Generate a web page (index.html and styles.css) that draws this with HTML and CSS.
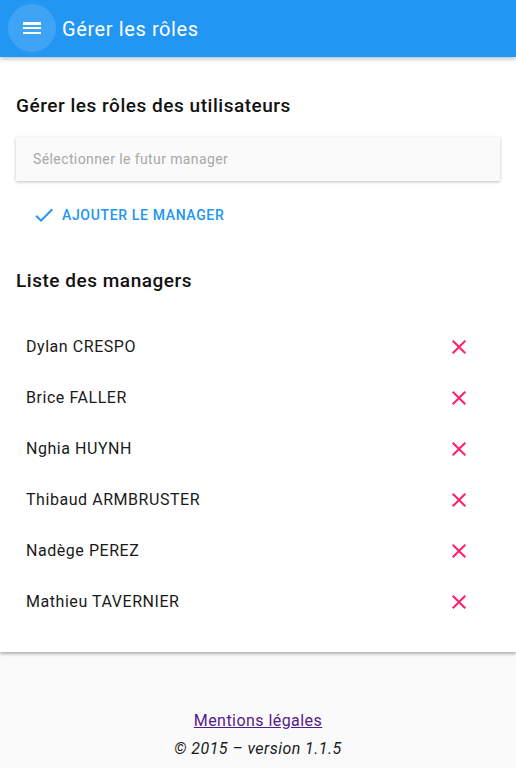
FILE: index.html
```html
<!DOCTYPE html>
<html lang="fr">
<head>
<meta charset="utf-8">
<title>Gérer les rôles</title>
<link rel="stylesheet" href="styles.css">
</head>
<body>
<header class="toolbar">
  <button class="menu-btn" aria-label="Menu">
    <svg viewBox="0 0 24 24" width="24" height="24"><path fill="#fff" d="M3 18h18v-2H3v2zm0-5h18v-2H3v2zm0-6v2h18V6H3z"/></svg>
  </button>
  <h1 class="toolbar-title">Gérer les rôles</h1>
</header>
<main class="card">
  <h2 class="section-title">Gérer les rôles des utilisateurs</h2>
  <div class="select">Sélectionner le futur manager</div>
  <button class="add-btn">
    <svg viewBox="0 0 24 24" width="24" height="24"><path fill="#2196f3" d="M9 16.17L4.83 12l-1.42 1.41L9 19 21 7l-1.41-1.41z"/></svg>
    <span>Ajouter le manager</span>
  </button>
  <h2 class="section-title list-title">Liste des managers</h2>
  <ul class="list">
    <li class="row"><span>Dylan CRESPO</span><svg class="x" viewBox="0 0 24 24" width="24" height="24"><path d="M19 6.41L17.59 5 12 10.59 6.41 5 5 6.41 10.59 12 5 17.59 6.41 19 12 13.41 17.59 19 19 17.59 13.41 12z"/></svg></li>
    <li class="row"><span>Brice FALLER</span><svg class="x" viewBox="0 0 24 24" width="24" height="24"><path d="M19 6.41L17.59 5 12 10.59 6.41 5 5 6.41 10.59 12 5 17.59 6.41 19 12 13.41 17.59 19 19 17.59 13.41 12z"/></svg></li>
    <li class="row"><span>Nghia HUYNH</span><svg class="x" viewBox="0 0 24 24" width="24" height="24"><path d="M19 6.41L17.59 5 12 10.59 6.41 5 5 6.41 10.59 12 5 17.59 6.41 19 12 13.41 17.59 19 19 17.59 13.41 12z"/></svg></li>
    <li class="row"><span>Thibaud ARMBRUSTER</span><svg class="x" viewBox="0 0 24 24" width="24" height="24"><path d="M19 6.41L17.59 5 12 10.59 6.41 5 5 6.41 10.59 12 5 17.59 6.41 19 12 13.41 17.59 19 19 17.59 13.41 12z"/></svg></li>
    <li class="row"><span>Nadège PEREZ</span><svg class="x" viewBox="0 0 24 24" width="24" height="24"><path d="M19 6.41L17.59 5 12 10.59 6.41 5 5 6.41 10.59 12 5 17.59 6.41 19 12 13.41 17.59 19 19 17.59 13.41 12z"/></svg></li>
    <li class="row"><span>Mathieu TAVERNIER</span><svg class="x" viewBox="0 0 24 24" width="24" height="24"><path d="M19 6.41L17.59 5 12 10.59 6.41 5 5 6.41 10.59 12 5 17.59 6.41 19 12 13.41 17.59 19 19 17.59 13.41 12z"/></svg></li>
  </ul>
</main>
<footer class="footer">
  <a class="legal" href="#">Mentions légales</a>
  <p class="version">© 2015 – version 1.1.5</p>
</footer>
</body>
</html>
```
FILE: styles.css
```css
* { box-sizing: border-box; }
html, body { margin: 0; padding: 0; }
body {
  background: #fafafa;
  font-family: Roboto, "Noto Sans", sans-serif;
  color: #212121;
  width: 516px;
  min-height: 768px;
}
.toolbar {
  position: relative;
  z-index: 2;
  height: 57px;
  background: #2196f3;
  display: flex;
  align-items: center;
  padding-left: 8px;
  box-shadow: 0 2px 4px rgba(0,0,0,0.25);
}
.menu-btn {
  width: 48px;
  height: 48px;
  border-radius: 50%;
  border: 0;
  padding: 0;
  background: rgba(255,255,255,0.14);
  display: flex;
  align-items: center;
  justify-content: center;
  margin-top: -1px;
}
.menu-btn svg { display: block; }
.toolbar-title {
  margin: 0 0 0 6px;
  font-size: 20px;
  font-weight: 400;
  color: #fff;
  line-height: 24px;
  letter-spacing: 0.6px;
}
.card {
  position: relative;
  z-index: 1;
  background: #fff;
  padding: 37px 16px 25px;
  box-shadow: 0 2px 3px rgba(0,0,0,0.3);
}
.section-title {
  margin: 0;
  font-size: 19px;
  font-weight: 500;
  line-height: 24px;
  color: #111;
  letter-spacing: 0.53px;
}
.select {
  margin-top: 19px;
  height: 44px;
  background: #fafafa;
  box-shadow: 0 1px 3px rgba(0,0,0,0.25);
  padding-left: 17px;
  display: flex;
  align-items: center;
  font-size: 14px;
  color: #a8a8a8;
  letter-spacing: 0.4px;
}
.add-btn {
  margin-top: 16px;
  margin-left: 16px;
  height: 36px;
  border: 0;
  background: none;
  padding: 0;
  display: flex;
  align-items: center;
  gap: 6px;
  font-family: inherit;
  font-size: 14px;
  font-weight: 500;
  text-transform: uppercase;
  color: #2196f3;
  letter-spacing: 0.65px;
}
.add-btn svg { display: block; }
.list-title { margin-top: 36px; }
.list {
  list-style: none;
  margin: 28px 0 0;
  padding: 0;
}
.row {
  height: 51px;
  display: flex;
  align-items: center;
  justify-content: space-between;
  padding: 0 29px 0 10px;
  font-size: 16px;
  color: #1a1a1a;
  letter-spacing: 0.55px;
}
.x { fill: #ff1f6e; display: block; }
.footer {
  text-align: center;
  padding-top: 57px;
}
.legal {
  color: #551a8b;
  font-size: 16px;
  line-height: 24px;
  letter-spacing: 0.45px;
}
.version {
  margin: 4px 0 0;
  font-style: italic;
  font-size: 16px;
  line-height: 24px;
  color: #1a1a1a;
  letter-spacing: 0.45px;
}
```
